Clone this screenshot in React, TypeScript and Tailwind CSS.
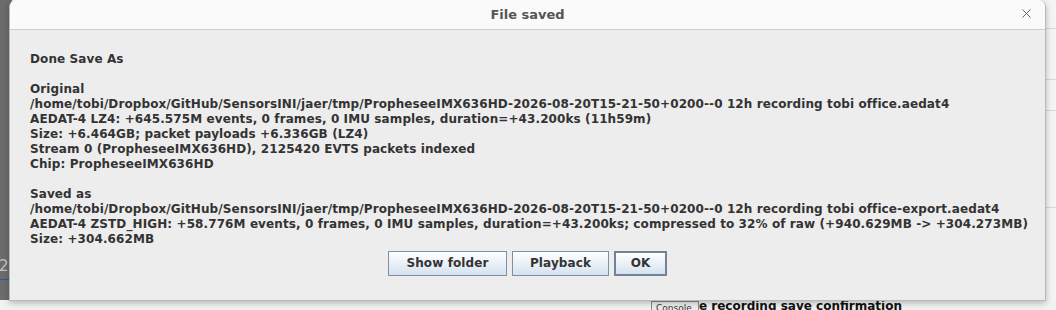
import { X } from 'lucide-react';

const font = { fontFamily: '"DejaVu Sans", "Liberation Sans", sans-serif' };

const original = [
  'Original',
  '/home/tobi/Dropbox/GitHub/SensorsINI/jaer/tmp/PropheseeIMX636HD-2026-08-20T15-21-50+0200--0 12h recording tobi office.aedat4',
  'AEDAT-4 LZ4: +645.575M events, 0 frames, 0 IMU samples, duration=+43.200ks (11h59m)',
  'Size: +6.464GB; packet payloads +6.336GB (LZ4)',
  'Stream 0 (PropheseeIMX636HD), 2125420 EVTS packets indexed',
  'Chip: PropheseeIMX636HD',
];

const saved = [
  'Saved as',
  '/home/tobi/Dropbox/GitHub/SensorsINI/jaer/tmp/PropheseeIMX636HD-2026-08-20T15-21-50+0200--0 12h recording tobi office-export.aedat4',
  'AEDAT-4 ZSTD_HIGH: +58.776M events, 0 frames, 0 IMU samples, duration=+43.200ks; compressed to 32% of raw (+940.629MB -> +304.273MB)',
  'Size: +304.662MB',
];

function SwingButton({ label, width, focused }: { label: string; width: string; focused?: boolean }) {
  return (
    <button
      className={
        'h-[25px] bg-gradient-to-b from-white to-[#d5e2ef] text-center text-[12px] font-bold tracking-[0.1px] text-[#333] ' +
        width +
        (focused ? ' border-2 border-[#71839a]' : ' border border-[#7d8fa3]')
      }
    >
      {label}
    </button>
  );
}

export default function App() {
  return (
    <div className="relative h-[310px] w-[1056px] overflow-hidden bg-[#f2f2f2]" style={font}>
      {/* main window behind the dialog */}
      <div className="absolute left-0 top-0 h-[300px] w-[12px] bg-[#6c6c6c]">
        <span className="absolute left-[-1px] top-[255px] text-[15px] text-[#c4c4c4]">2</span>
        <div className="absolute left-0 top-[279px] h-px w-full bg-[#3050c0]" />
      </div>
      <div className="absolute right-0 top-0 flex h-[300px] w-[12px] flex-col bg-[#f4f4f4]">
        <div className="mt-[28px] h-px bg-[#d6d6d6]" />
        <div className="mt-[50px] h-px bg-[#d6d6d6]" />
        <div className="mt-[30px] h-px bg-[#d6d6d6]" />
        <div className="mt-[96px] h-px bg-[#d6d6d6]" />
      </div>
      <div className="absolute left-[651px] top-[301px] h-[12px] w-[48px] border border-[#888] bg-[#eee] px-1 text-[9px] leading-[12px] text-[#333]">
        Console
      </div>
      <div className="absolute left-[699px] top-[299px] text-[12px] font-bold leading-[15px] text-[#111]">
        e recording save confirmation
      </div>

      {/* dialog */}
      <div className="absolute left-[9px] top-0 flex h-[301px] w-[1037px] flex-col overflow-hidden rounded-t-[7px] border-x border-b border-[#b8b8b8] bg-[#ededed] shadow-[0_2px_6px_rgba(0,0,0,0.25)]">
        <div className="relative flex h-[30px] shrink-0 items-center justify-center border-b border-[#cfcfcf] bg-[#fafafa]">
          <span className="text-[13px] font-bold text-[#555]">File saved</span>
          <X className="absolute right-[11px] top-[6px] h-[15px] w-[15px] text-[#555]" strokeWidth={1.4} />
        </div>
        <div className="flex flex-1 flex-col px-5 pt-[22px] text-[12px] font-bold leading-[15px] tracking-[0.1px] text-[#333]">
          <div>Done Save As</div>
          <div className="h-[15px]" />
          {original.map((l) => (
            <div key={l} className="whitespace-pre">{l}</div>
          ))}
          <div className="h-[15px]" />
          {saved.map((l) => (
            <div key={l} className="whitespace-pre">{l}</div>
          ))}
          <div className="mt-[4px] flex justify-center gap-[5px]">
            <SwingButton label="Show folder" width="w-[119px]" />
            <SwingButton label="Playback" width="w-[97px]" />
            <SwingButton label="OK" width="w-[53px]" focused />
          </div>
        </div>
      </div>
    </div>
  );
}
